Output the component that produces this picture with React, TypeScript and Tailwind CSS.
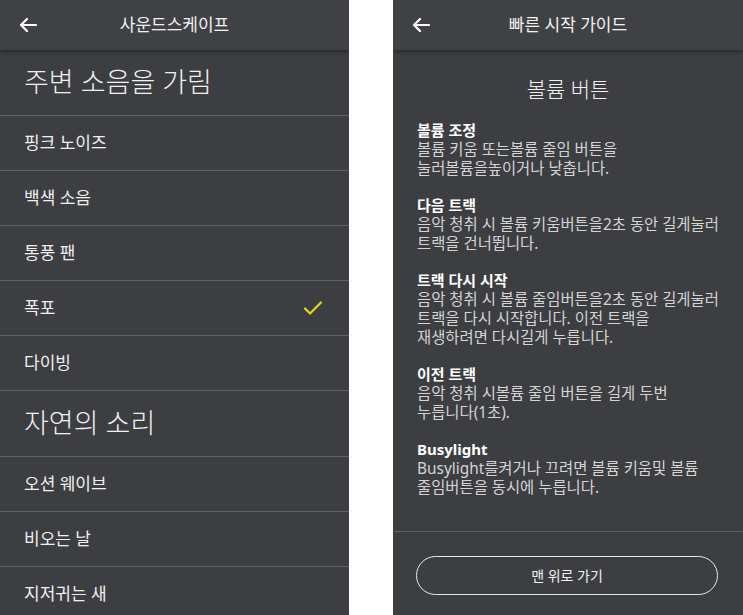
import React from "react";

const font = { fontFamily: '"Noto Sans", "Noto Sans CJK KR", sans-serif' };

function BackArrow() {
  return (
    <svg width="18" height="16" viewBox="0 0 18 16" fill="none" stroke="white" strokeWidth="2.2" strokeLinecap="round" strokeLinejoin="round">
      <path d="M17 8H2M8 2L2 8l6 6" />
    </svg>
  );
}

function Header({ title }: { title: string }) {
  return (
    <div className="relative z-10 flex h-[50px] items-center bg-[#404145] px-[19px] shadow-[0_2px_4px_rgba(0,0,0,0.35)]">
      <BackArrow />
      <div className="absolute inset-x-0 text-center text-[17px] text-[#f2f2f2]">{title}</div>
    </div>
  );
}

type Row = { label: string; kind: "section" | "item"; checked?: boolean };

const rows: Row[] = [
  { label: "주변 소음을 가림", kind: "section" },
  { label: "핑크 노이즈", kind: "item" },
  { label: "백색 소음", kind: "item" },
  { label: "통풍 팬", kind: "item" },
  { label: "폭포", kind: "item", checked: true },
  { label: "다이빙", kind: "item" },
  { label: "자연의 소리", kind: "section" },
  { label: "오션 웨이브", kind: "item" },
  { label: "비오는 날", kind: "item" },
  { label: "지저귀는 새", kind: "item" },
];

const guide = [
  { title: "볼륨 조정", lines: ["볼륨 키움 또는볼륨 줄임 버튼을", "눌러볼륨을높이거나 낮춥니다."] },
  { title: "다음 트랙", lines: ["음악 청취 시 볼륨 키움버튼을2초 동안 길게눌러", "트랙을 건너뜁니다."] },
  {
    title: "트랙 다시 시작",
    lines: ["음악 청취 시 볼륨 줄임버튼을2초 동안 길게눌러", "트랙을 다시 시작합니다. 이전 트랙을", "재생하려면 다시길게 누릅니다."],
  },
  { title: "이전 트랙", lines: ["음악 청취 시볼륨 줄임 버튼을 길게 두번", "누릅니다(1초)."] },
  { title: "Busylight", lines: ["Busylight를켜거나 끄려면 볼륨 키움및 볼륨", "줄임버튼을 동시에 누릅니다."] },
];

function Soundscape() {
  return (
    <div className="h-[615px] w-[349px] overflow-hidden bg-[#3d3e42]">
      <Header title="사운드스케이프" />
      {rows.map((r) =>
        r.kind === "section" ? (
          <div key={r.label} className="flex h-[66px] items-center border-b border-[#606165] px-[24px] text-[27px] font-light text-[#f0f0f0]">
            {r.label}
          </div>
        ) : (
          <div key={r.label} className="flex h-[55px] items-center justify-between border-b border-[#606165] pl-[24px] pr-[26px] text-[17px] text-[#f0f0f0]">
            <span>{r.label}</span>
            {r.checked && (
              <svg width="20" height="16" viewBox="0 0 20 16" fill="none" stroke="#e8d41c" strokeWidth="2.2" strokeLinecap="round" strokeLinejoin="round">
                <path d="M2 8.5l5 5L18 2.5" />
              </svg>
            )}
          </div>
        )
      )}
    </div>
  );
}

function QuickGuide() {
  return (
    <div className="h-[615px] w-[350px] overflow-hidden bg-[#3d3e42]">
      <Header title="빠른 시작 가이드" />
      <div className="mt-[25px] text-center text-[21px] font-light leading-[28px] text-[#f0f0f0]">볼륨 버튼</div>
      <div className="mt-[17px] flex flex-col gap-[17px] px-[24px] pb-[34px]">
        {guide.map((g) => (
          <div key={g.title}>
            <div className="text-[15px] font-bold leading-[20px] text-white">{g.title}</div>
            {g.lines.map((l) => (
              <div key={l} className="text-[15.4px] leading-[19px] text-[#d4d4d4]">
                {l}
              </div>
            ))}
          </div>
        ))}
      </div>
      <div className="border-t border-[#5c5d61] px-[23px] pt-[24px]">
        <button className="flex h-[39px] w-[302px] items-center justify-center rounded-full border border-[#e8e8e8] text-[14px] text-[#f0f0f0]">
          맨 위로 가기
        </button>
      </div>
    </div>
  );
}

export default function App() {
  return (
    <div className="flex h-[615px] w-[743px] gap-[44px] bg-white" style={font}>
      <Soundscape />
      <QuickGuide />
    </div>
  );
}
